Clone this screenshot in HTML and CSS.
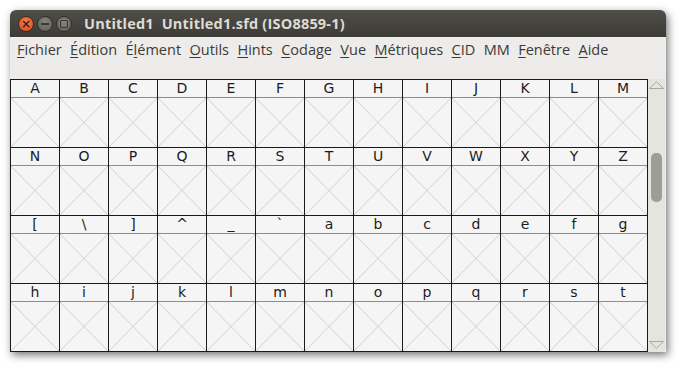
FILE: index.html
```html
<!DOCTYPE html>
<html lang="fr">
<head>
    <meta charset="UTF-8">
    <title>Untitled1</title>
    <link rel="stylesheet" href="styles.css">
</head>
<body>
<div class="window">
    <header class="titlebar">
        <div class="buttons">
            <span class="btn close">&#215;</span>
            <span class="btn min"><i class="bar"></i></span>
            <span class="btn max"><i class="box"></i></span>
        </div>
        <div class="title">Untitled1  Untitled1.sfd (ISO8859-1)</div>
    </header>
    <nav class="menubar">
        <span><u>F</u>ichier</span>
        <span><u>É</u>dition</span>
        <span>É<u>l</u>ément</span>
        <span><u>O</u>utils</span>
        <span><u>H</u>ints</span>
        <span><u>C</u>odage</span>
        <span><u>V</u>ue</span>
        <span><u>M</u>étriques</span>
        <span><u>C</u>ID</span>
        <span>MM</span>
        <span><u>F</u>enêtre</span>
        <span><u>A</u>ide</span>
    </nav>
    <div class="toolbar"></div>
    <div class="view">
        <div class="grid" id="grid"></div>
        <div class="scrollbar">
            <svg class="arrow" width="15" height="8" viewBox="0 0 15 8"><path d="M0.5 7.5 L7.5 0.8 L14.5 7.5 Z" fill="none" stroke="#a9a8a4"/></svg>
            <div class="track"><span class="thumb"></span></div>
            <svg class="arrow down" width="15" height="8" viewBox="0 0 15 8"><path d="M0.5 0.5 L7.5 7.2 L14.5 0.5 Z" fill="none" stroke="#a9a8a4"/></svg>
        </div>
    </div>
</div>
<script>
    const chars = 'ABCDEFGHIJKLMNOPQRSTUVWXYZ[\\]^_`abcdefghijklmnopqrst';
    const grid = document.getElementById('grid');
    for (const c of chars) {
        const cell = document.createElement('div');
        cell.className = 'cell';
        const label = document.createElement('div');
        label.className = 'label';
        label.textContent = c;
        const glyph = document.createElement('div');
        glyph.className = 'glyph';
        cell.appendChild(label);
        cell.appendChild(glyph);
        grid.appendChild(cell);
    }
</script>
</body>
</html>
```

FILE: styles.css
```css
html, body {
    margin: 0;
    height: 100%;
}

body {
    background-color: #ffffff;
    padding: 10px 0 0 10px;
    box-sizing: border-box;
    font-family: 'Open Sans', 'DejaVu Sans', sans-serif;
}

.window {
    width: 656px;
    height: 342px;
    display: flex;
    flex-direction: column;
    background-color: #edecea;
    border-radius: 6px 6px 0 0;
    box-shadow: 2px 3px 8px rgba(0, 0, 0, 0.55);
    overflow: hidden;
}

.titlebar {
    height: 27px;
    display: flex;
    align-items: center;
    background: linear-gradient(#4f4e49, #3c3b37);
    flex-shrink: 0;
}

.buttons {
    display: flex;
    gap: 3px;
    padding-left: 8px;
}

.btn {
    width: 16px;
    height: 16px;
    border-radius: 50%;
    display: flex;
    justify-content: center;
    align-items: center;
    box-sizing: border-box;
}

.close {
    background: radial-gradient(circle at 50% 35%, #f27a4f, #de4a1b);
    border: 1px solid #3a2a22;
    color: #3b2219;
    font-size: 12px;
    line-height: 1;
    font-family: 'DejaVu Sans', sans-serif;
    font-weight: bold;
}

.min, .max {
    background: radial-gradient(circle at 50% 35%, #84837d, #5d5c57);
    border: 1px solid #2f2e2b;
}

.bar {
    width: 8px;
    height: 2px;
    background-color: #3a3935;
}

.box {
    width: 6px;
    height: 6px;
    border: 1.5px solid #3a3935;
    border-radius: 1px;
}

.title {
    margin-left: 12px;
    color: #dfdbd2;
    font-size: 14.5px;
    font-weight: bold;
    white-space: pre;
    letter-spacing: 0.2px;
}

.menubar {
    height: 24px;
    display: flex;
    align-items: center;
    gap: 8.4px;
    padding-left: 7px;
    font-size: 14.5px;
    color: #3c3b37;
    flex-shrink: 0;
}

.menubar u {
    text-underline-offset: 2px;
}

.toolbar {
    height: 18px;
    flex-shrink: 0;
}

.view {
    display: flex;
    flex: 1;
    overflow: hidden;
}

.grid {
    display: grid;
    grid-template-columns: repeat(13, 49px);
    border-top: 1px solid #1a1a1a;
    border-left: 1px solid #1a1a1a;
    align-self: flex-start;
}

.cell {
    border-right: 1px solid #1a1a1a;
    border-bottom: 1px solid #1a1a1a;
    background-color: #f6f5f5;
}

.label {
    height: 17px;
    border-bottom: 1px solid #8e8d8b;
    text-align: center;
    font-family: 'DejaVu Sans', sans-serif;
    font-size: 14px;
    line-height: 17px;
    color: #1c1c1c;
}

.glyph {
    height: 49px;
    background:
        linear-gradient(to top right, transparent calc(50% - 0.8px), #d6d4d4 50%, transparent calc(50% + 0.8px)),
        linear-gradient(to bottom right, transparent calc(50% - 0.8px), #d6d4d4 50%, transparent calc(50% + 0.8px));
}

.scrollbar {
    width: 17px;
    display: flex;
    flex-direction: column;
    align-items: center;
    background-color: #e5e4e1;
}

.arrow {
    flex-shrink: 0;
    margin-top: 2px;
}

.arrow.down {
    margin-top: 0;
    margin-bottom: 3px;
}

.track {
    flex: 1;
    padding-top: 64px;
}

.thumb {
    display: block;
    width: 11px;
    height: 49px;
    border-radius: 5px;
    background-color: #9e9d99;
}
```
